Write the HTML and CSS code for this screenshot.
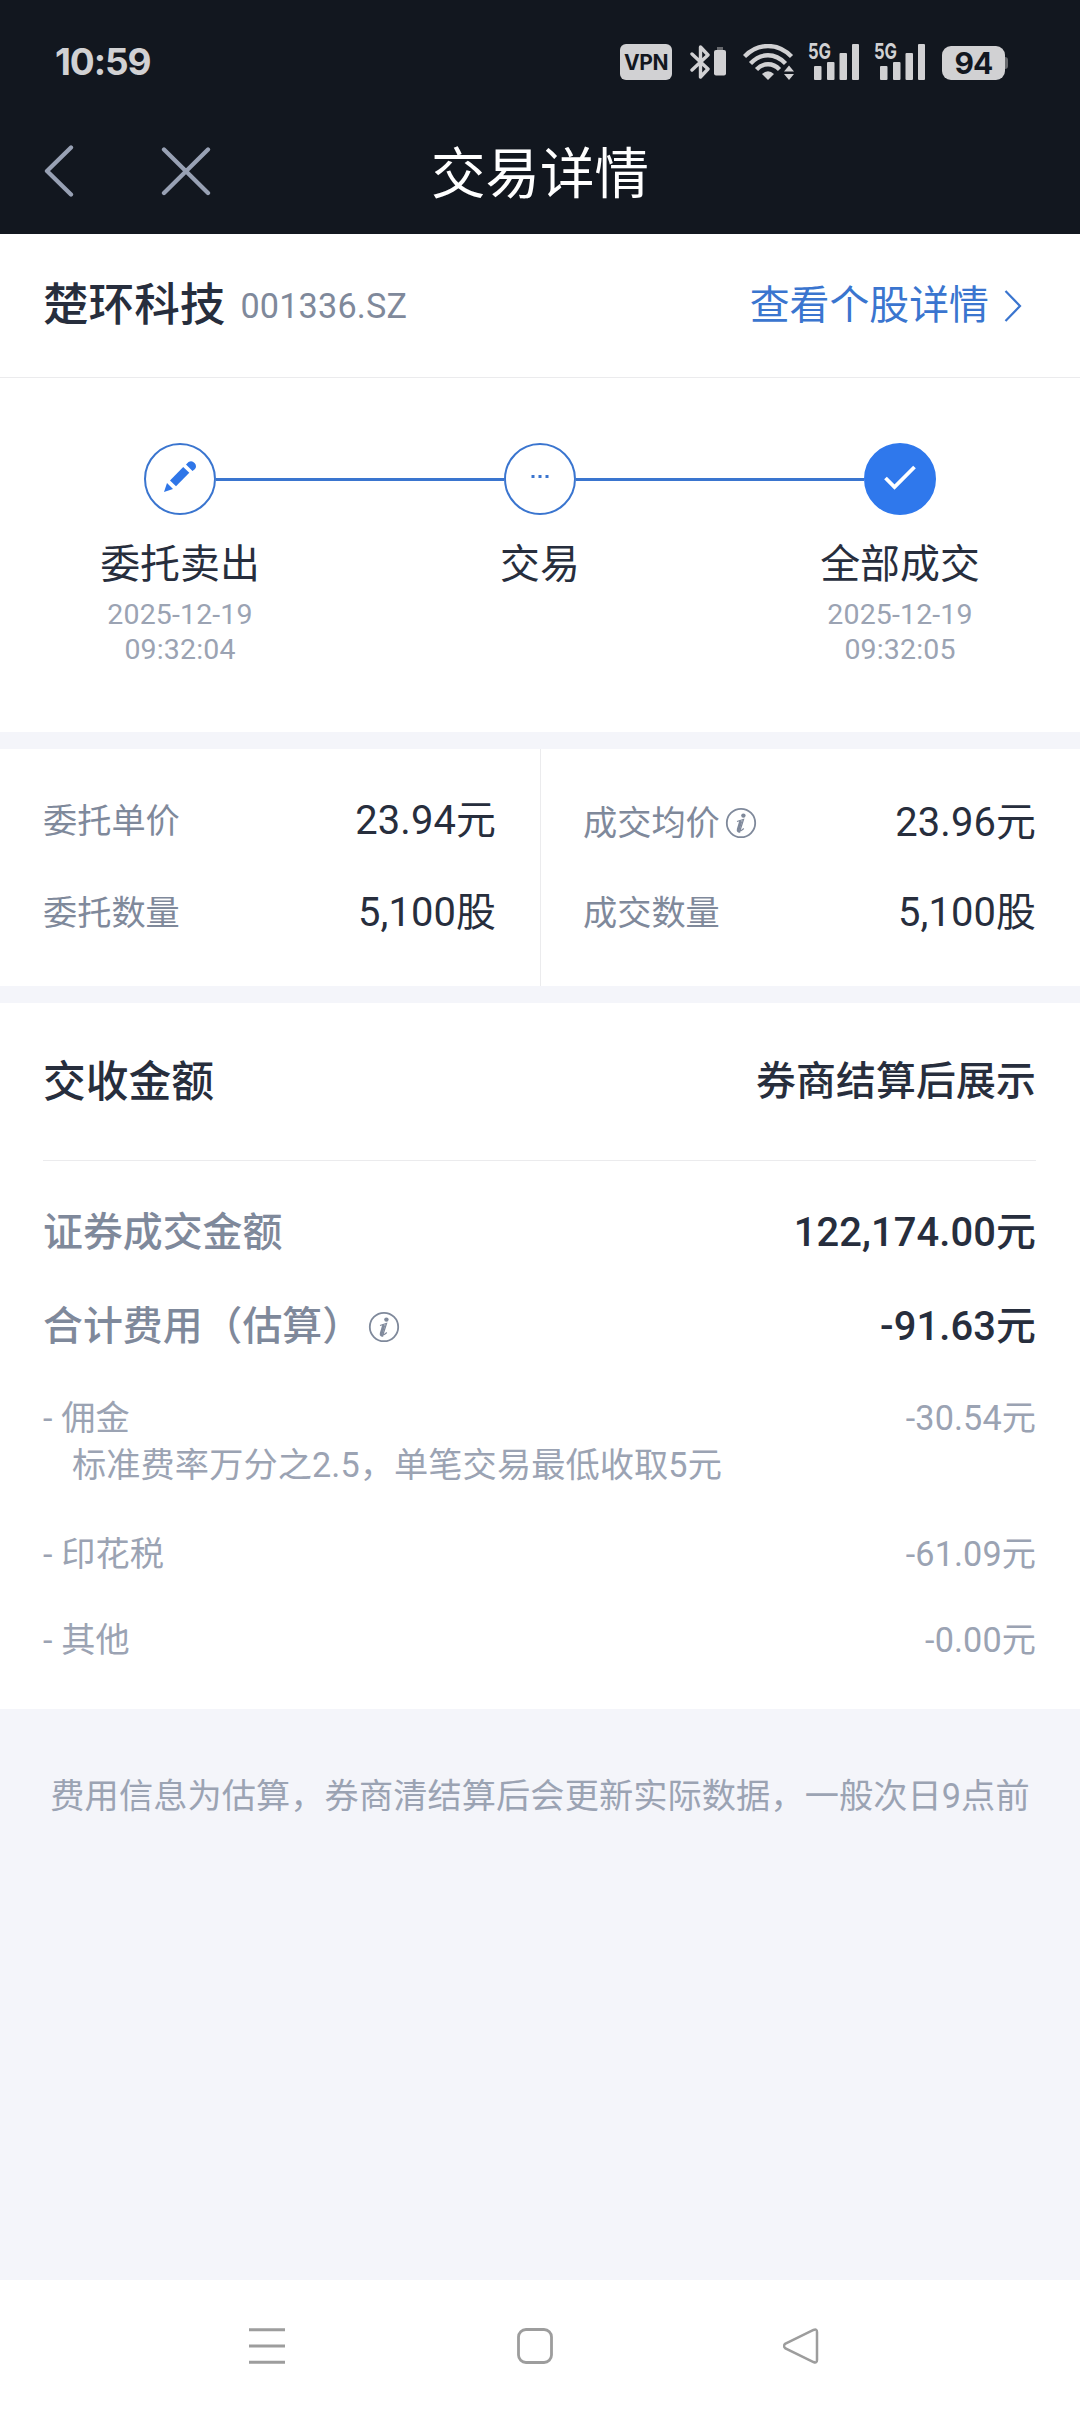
FILE: index.html
```html
<!DOCTYPE html>
<html lang="zh-CN">
<head>
<meta charset="utf-8">
<title>交易详情</title>
<link rel="stylesheet" href="styles.css">
</head>
<body>
<div class="screen">
  <header class="top">
    <div class="status">
      <span class="clock">10:59</span>
      <div class="status-icons">
        <span class="vpn">VPN</span>
        <svg class="bluetooth" width="37" height="36" viewBox="0 0 37 36">
          <path d="M2 10 18 25 10.500 33V3L18 11 2 26" fill="none" stroke="currentColor" stroke-width="3.400" stroke-linejoin="round" stroke-linecap="round"/>
          <path d="M27 3h6v3h-6z" fill="#67696d"/>
          <rect x="24" y="6" width="12" height="25.500" rx="2" fill="currentColor"/>
        </svg>
        <svg class="wifi" width="52" height="36" viewBox="0 0 52 36">
          <g fill="none" stroke="currentColor" stroke-width="4.300">
            <path d="M1.500 12.500C15-1.500 35-1.500 48.500 12.500"/>
            <path d="M7.500 19.500C18 8.500 32 8.500 42.500 19.500"/>
            <path d="M13.500 25.500C20 18.500 30 18.500 36.500 25.500"/>
          </g>
          <path d="M19 30Q25 24.500 31 30L25 36Z" fill="currentColor"/>
          <path d="M41 27.500 46 21.500 51 27.500ZM41 30H51L46 36Z" fill="currentColor"/>
        </svg>
        <svg class="signal" width="52" height="46" viewBox="0 -8 52 46">
          <text class="net" x="0" y="17" textLength="23" lengthAdjust="spacingAndGlyphs">5G</text>
          <g fill="currentColor"><rect x="6" y="24" width="7.500" height="14" rx="1"/><rect x="19" y="20" width="7.500" height="18" rx="1"/><rect x="31.500" y="11" width="7.500" height="27" rx="1"/><rect x="44" y="2" width="7" height="36" rx="1"/></g>
        </svg>
        <svg class="signal" width="52" height="46" viewBox="0 -8 52 46">
          <text class="net" x="0" y="17" textLength="23" lengthAdjust="spacingAndGlyphs">5G</text>
          <g fill="currentColor"><rect x="6" y="24" width="7.500" height="14" rx="1"/><rect x="19" y="20" width="7.500" height="18" rx="1"/><rect x="31.500" y="11" width="7.500" height="27" rx="1"/><rect x="44" y="2" width="7" height="36" rx="1"/></g>
        </svg>
        <span class="battery">94</span>
      </div>
    </div>
    <div class="titlebar">
      <div class="nav-actions">
        <svg width="31" height="54" viewBox="0 0 31 54"><path d="M28 3.500 4 27 28 50.500" fill="none" stroke="currentColor" stroke-width="4.300" stroke-linecap="round" stroke-linejoin="round"/></svg>
        <svg width="50" height="50" viewBox="0 0 50 50"><path d="M3 3.500 47 47M47 3.500 3 47" fill="none" stroke="currentColor" stroke-width="4.300" stroke-linecap="round"/></svg>
      </div>
      <h1>交易详情</h1>
      <div></div>
    </div>
  </header>

  <section class="stock">
    <div class="stock-id"><span class="name">楚环科技</span><span class="code">001336.SZ</span></div>
    <a class="link">查看个股详情<svg width="18" height="34" viewBox="0 0 18 34"><path d="M1.500 2 16 17 1.500 32" fill="none" stroke="currentColor" stroke-width="2.200"/></svg></a>
  </section>

  <section class="steps">
    <div class="step">
      <div class="marker-row"><i></i><span class="marker"><svg width="34" height="34" viewBox="0 0 34 34"><g fill="#2f76e8"><path d="M1 33 4 24 10 30Z"/><path d="M7 21.500 20.200 7.900 26.300 13.800 13 27.300Z"/><path d="M23 5.500 25.500 3A4.900 4.900 0 0 1 32 10L29.500 12Z"/></g></svg></span><i class="line"></i></div>
      <div class="label">委托卖出</div>
      <div class="time">2025-12-19<br>09:32:04</div>
    </div>
    <div class="step">
      <div class="marker-row"><i class="line"></i><span class="marker"><svg width="18" height="3" viewBox="0 0 18 3"><path d="M.5 0h3v3h-3zM7.500 0h3v3h-3zM14.500 0h3v3h-3z" fill="#3a75cf"/></svg></span><i class="line"></i></div>
      <div class="label">交易</div>
    </div>
    <div class="step">
      <div class="marker-row"><i class="line"></i><span class="marker done"><svg width="34" height="28" viewBox="0 0 34 28"><path d="M2.500 14 11.500 23 31.500 3" fill="none" stroke="#fff" stroke-width="3.800"/></svg></span><i></i></div>
      <div class="label">全部成交</div>
      <div class="time">2025-12-19<br>09:32:05</div>
    </div>
  </section>

  <section class="quote">
    <div class="col">
      <div class="pair"><span class="key">委托单价</span><span class="val">23.94元</span></div>
      <div class="pair"><span class="key">委托数量</span><span class="val">5,100股</span></div>
    </div>
    <div class="col">
      <div class="pair lowered"><span class="key">成交均价<svg class="info" width="32" height="32" viewBox="0 0 32 32"><circle cx="16" cy="16" r="14.200" fill="none" stroke="currentColor" stroke-width="1.800"/><circle cx="18.400" cy="8.600" r="2.200" fill="currentColor"/><path d="M12 14.500 18.500 12.500 15 23.500Q14.700 25 18.800 21.500" fill="none" stroke="currentColor" stroke-width="1.300"/><path d="M15.800 14 13.300 22.500Q12.800 24.600 15 24" fill="none" stroke="currentColor" stroke-width="3"/></svg></span><span class="val">23.96元</span></div>
      <div class="pair"><span class="key">成交数量</span><span class="val">5,100股</span></div>
    </div>
  </section>

  <section class="settle">
    <div class="settle-head"><span class="big">交收金额</span><span class="strong">券商结算后展示</span></div>
    <div class="amounts">
      <div class="amount"><span>证券成交金额</span><span class="strong">122,174.00元</span></div>
      <div class="amount"><span class="with-icon">合计费用（估算）<svg class="info" width="32" height="32" viewBox="0 0 32 32"><circle cx="16" cy="16" r="14.200" fill="none" stroke="currentColor" stroke-width="1.800"/><circle cx="18.400" cy="8.600" r="2.200" fill="currentColor"/><path d="M12 14.500 18.500 12.500 15 23.500Q14.700 25 18.800 21.500" fill="none" stroke="currentColor" stroke-width="1.300"/><path d="M15.800 14 13.300 22.500Q12.800 24.600 15 24" fill="none" stroke="currentColor" stroke-width="3"/></svg></span><span class="strong">-91.63元</span></div>
    </div>
    <div class="fees">
      <div class="fee"><span>- 佣金</span><span>-30.54元</span></div>
      <div class="note">标准费率万分之2.5，单笔交易最低收取5元</div>
      <div class="fee"><span>- 印花税</span><span>-61.09元</span></div>
      <div class="fee last"><span>- 其他</span><span>-0.00元</span></div>
    </div>
  </section>

  <p class="hint">费用信息为估算，券商清结算后会更新实际数据，一般次日9点前</p>

  <nav class="sysnav">
    <svg width="36" height="36" viewBox="0 0 36 36"><path d="M0 1.700H36M0 18H36M0 34.300H36" stroke="currentColor" stroke-width="3"/></svg>
    <svg class="home" width="36" height="36" viewBox="0 0 36 36"><rect x="1.500" y="1.500" width="33" height="33" rx="7.500" fill="none" stroke="currentColor" stroke-width="2.800"/></svg>
    <svg width="36" height="36" viewBox="0 0 36 36"><path d="M2.500 15.600 30.500 2Q34 .5 34 4V32Q34 35.500 30.500 34L2.500 20.400Q-.5 18 2.500 15.600Z" fill="none" stroke="currentColor" stroke-width="2.500"/></svg>
  </nav>
</div>
</body>
</html>
```
FILE: styles.css
```css
* { box-sizing: border-box; }
body {
  margin: 0;
  background: #f4f5fa;
  font-family: Roboto, "Noto Sans CJK SC", sans-serif;
  color: #272e3d;
}
svg { display: block; flex: none; }
.screen {
  width: 1080px;
  height: 2412px;
  display: flex;
  flex-direction: column;
  overflow: hidden;
}

/* Status bar and title */
.top { height: 234px; background: #12171f; }
.status {
  height: 114px;
  padding: 0 72px 0 55px;
  display: flex;
  justify-content: space-between;
  color: #d1d1d3;
}
.clock {
  padding-top: 39px;
  font: 700 37px/46px Inter, sans-serif;
  letter-spacing: -1.1px;
}
.status-icons { display: flex; align-items: flex-start; }
.vpn {
  width: 52px;
  height: 36px;
  margin: 44px 18px 0 0;
  border-radius: 6px;
  background: #d1d1d3;
  color: #12171f;
  font: 700 21px/37px Inter, sans-serif;
  letter-spacing: -0.4px;
  text-align: center;
}
.bluetooth { margin: 44px 16px 0 0; }
.wifi { margin: 44px 13px 0 0; }
.signal { margin: 34px 14px 0 0; }
.net { font: 700 22px Inter, sans-serif; fill: currentColor; }
.battery {
  position: relative;
  width: 63px;
  height: 34px;
  margin: 46px 3px 0 2px;
  border-radius: 9px;
  background: #d1d1d3;
  color: #12171f;
  font: 700 30px/35px Inter, sans-serif;
  letter-spacing: -0.8px;
  text-align: center;
}
.battery::after {
  content: "";
  position: absolute;
  left: 63px;
  top: 11px;
  width: 3px;
  height: 12px;
  border-radius: 0 3px 3px 0;
  background: #67696d;
}
.titlebar {
  height: 120px;
  padding: 0 43px;
  display: grid;
  grid-template-columns: 1fr auto 1fr;
  align-items: center;
}
.nav-actions {
  display: flex;
  align-items: center;
  gap: 87px;
  height: 54px;
  margin-top: -7px;
  color: #98a1b4;
}
h1 {
  margin: 0;
  font-size: 54.5px;
  font-weight: 400;
  line-height: 80px;
  color: #fff;
}

/* Stock heading */
.stock {
  height: 144px;
  padding: 0 58px 0 43px;
  display: flex;
  align-items: center;
  justify-content: space-between;
  background: #fff;
  border-bottom: 1px solid #ebebed;
}
.stock-id, .link { display: flex; align-items: center; }
.name { padding-top: 1px; font-size: 45.6px; font-weight: 500; line-height: 64px; }
.code { margin-left: 15px; font-size: 34.2px; line-height: 48px; letter-spacing: 0.2px; color: #7f899b; }
.link { gap: 15px; font-size: 39.9px; line-height: 56px; color: #3a75cf; }

/* Progress */
.steps {
  height: 354px;
  padding-top: 65px;
  display: grid;
  grid-template-columns: repeat(3, 1fr);
  align-items: start;
  background: #fff;
  text-align: center;
}
.marker-row { display: flex; align-items: center; }
.marker-row i { flex: 1; height: 3px; }
.line { background: #3a75cf; }
.marker {
  width: 72px;
  height: 72px;
  display: flex;
  align-items: center;
  justify-content: center;
  padding-bottom: 6px;
  border: 2px solid #3a75cf;
  border-radius: 50%;
}
.done { background: #2f78ec; border-color: #2f78ec; padding-bottom: 3px; }
.label { margin-top: 21px; font-size: 39.9px; line-height: 57px; }
.time { margin-top: 4px; font-size: 28.5px; line-height: 35px; letter-spacing: 0.15px; color: #9ba3b3; }

/* Price and quantity */
.quote {
  height: 237px;
  margin-top: 17px;
  display: grid;
  grid-template-columns: 1fr 1fr;
  background: #fff;
}
.col { padding: 26px 44px 0 43px; }
.col + .col { border-left: 1px solid #ebebed; padding-left: 42px; }
.pair {
  height: 92px;
  display: flex;
  align-items: center;
  justify-content: space-between;
}
.lowered { padding-top: 3px; }
.key { display: flex; align-items: center; font-size: 34.2px; line-height: 48px; color: #7f899b; }
.key .info { margin-left: 5px; }
.val { font-size: 39.9px; line-height: 56px; letter-spacing: 0.1px; }

/* Settlement */
.settle {
  height: 706px;
  margin-top: 17px;
  padding: 0 44px 0 43px;
  background: #fff;
}
.settle-head {
  height: 158px;
  padding-top: 1px;
  display: flex;
  align-items: center;
  justify-content: space-between;
  border-bottom: 1px solid #ebebed;
}
.big { font-size: 42.75px; font-weight: 500; line-height: 60px; }
.strong { font-size: 39.9px; font-weight: 500; line-height: 56px; letter-spacing: 0.1px; color: #272e3d; }
.amounts { padding-top: 25px; }
.amount {
  height: 94px;
  display: flex;
  align-items: center;
  justify-content: space-between;
  font-size: 39.9px;
  font-weight: 500;
  line-height: 56px;
  color: #7f899b;
}
.with-icon { display: flex; align-items: center; gap: 6px; }
.fees {
  padding-top: 21px;
  font-size: 34.2px;
  line-height: 47px;
  letter-spacing: 0.1px;
  color: #9ba3b3;
}
.fee { display: flex; justify-content: space-between; }
.note { padding: 0 0 42px 29px; }
.last { margin-top: 39px; }

.hint {
  flex: 1;
  margin: 0;
  padding-top: 63px;
  font-size: 34.2px;
  line-height: 48px;
  letter-spacing: 0.1px;
  text-align: center;
  white-space: nowrap;
  color: #9ba3b3;
}

/* System navigation */
.sysnav {
  height: 132px;
  padding: 0 261px 0 249px;
  display: flex;
  align-items: center;
  justify-content: space-between;
  background: #fff;
  color: #9d9d9d;
}
.home { margin-left: 2px; }
```
